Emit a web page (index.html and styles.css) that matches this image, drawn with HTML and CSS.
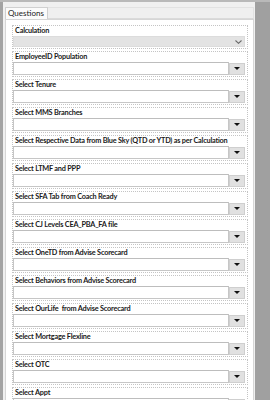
FILE: index.html
```html
<!DOCTYPE html>
<html>
<head>
<meta charset="utf-8">
<link rel="stylesheet" href="styles.css">
</head>
<body>
<div class="frame">
  <div class="topband"></div>
  <div class="row">
    <div class="leftbar"></div>
    <div class="main">
      <div class="tabs">
        <div class="tab">Questions</div>
        <div class="tabfill"></div>
      </div>
      <div class="panel">
        <div class="group calc">
          <div class="label">Calculation</div>
          <div class="calcbox"><svg class="chev" width="7" height="4" viewBox="0 0 7 4"><path d="M0.5 0.5 L3.5 3.3 L6.5 0.5" fill="none" stroke="#6a6a6a" stroke-width="1.1"/></svg></div>
        </div>
        <div class="group"><div class="label">EmployeeID Population</div><div class="combo"><div class="field"></div><div class="btn"><span class="tri"></span></div></div></div>
        <div class="group"><div class="label">Select Tenure</div><div class="combo"><div class="field"></div><div class="btn"><span class="tri"></span></div></div></div>
        <div class="group"><div class="label">Select MMS Branches</div><div class="combo"><div class="field"></div><div class="btn"><span class="tri"></span></div></div></div>
        <div class="group"><div class="label">Select Respective Data from Blue Sky (QTD or YTD) as per Calculation</div><div class="combo"><div class="field"></div><div class="btn"><span class="tri"></span></div></div></div>
        <div class="group"><div class="label">Select LTMF and PPP</div><div class="combo"><div class="field"></div><div class="btn"><span class="tri"></span></div></div></div>
        <div class="group"><div class="label">Select SFA Tab from Coach Ready</div><div class="combo"><div class="field"></div><div class="btn"><span class="tri"></span></div></div></div>
        <div class="group"><div class="label">Select CJ Levels CEA_PBA_FA file</div><div class="combo"><div class="field"></div><div class="btn"><span class="tri"></span></div></div></div>
        <div class="group"><div class="label">Select OneTD from Advise Scorecard</div><div class="combo"><div class="field"></div><div class="btn"><span class="tri"></span></div></div></div>
        <div class="group"><div class="label">Select Behaviors from Advise Scorecard</div><div class="combo"><div class="field"></div><div class="btn"><span class="tri"></span></div></div></div>
        <div class="group"><div class="label">Select OurLife&nbsp; from Advise Scorecard</div><div class="combo"><div class="field"></div><div class="btn"><span class="tri"></span></div></div></div>
        <div class="group"><div class="label">Select Mortgage Flexline</div><div class="combo"><div class="field"></div><div class="btn"><span class="tri"></span></div></div></div>
        <div class="group"><div class="label">Select OTC</div><div class="combo"><div class="field"></div><div class="btn"><span class="tri"></span></div></div></div>
        <div class="group"><div class="label">Select Appt</div><div class="combo"><div class="field"></div><div class="btn"><span class="tri"></span></div></div></div>
      </div>
    </div>
    <div class="rightbar"></div>
  </div>
</div>
</body>
</html>
```

FILE: styles.css
```css
html, body {
  margin: 0;
  padding: 0;
  background: #f0f0f0;
  overflow: hidden;
}
.frame {
  width: 270px;
  height: 400px;
  display: flex;
  flex-direction: column;
  font-family: Lato, "Open Sans", sans-serif;
  font-size: 7.3px;
  color: #1a1a1a;
}
.topband {
  height: 2px;
  background: #b9b9b9;
  flex: none;
}
.row {
  flex: 1;
  display: flex;
  min-height: 0;
}
.leftbar {
  width: 3px;
  background: #a3a3a3;
  flex: none;
}
.rightbar {
  width: 15px;
  background: #a0a0a0;
  flex: none;
}
.main {
  flex: 1;
  padding: 5px 1px 0 2px;
  display: flex;
  flex-direction: column;
  min-width: 0;
}
.tabs {
  display: flex;
  height: 12px;
  flex: none;
}
.tab {
  width: 39px;
  border: 1px solid #d0d0d0;
  border-bottom: none;
  background: #fbfbfb;
  padding-left: 2px;
  line-height: 11px;
  font-size: 8px;
}
.tabfill {
  flex: 1;
  background: #efefef;
  border-top: 1px solid #e2e2e2;
  border-right: 1px solid #e2e2e2;
  border-bottom: 1px solid #dadada;
}
.panel {
  flex: 1;
  background: #ffffff;
  border: 1px solid #d6d6d6;
  border-bottom: none;
  padding: 5px 5px 0 6px;
  display: flex;
  flex-direction: column;
  gap: 2px;
}
.group {
  border: 1px dotted #c4c4c4;
  height: 26px;
  box-sizing: border-box;
  display: flex;
  flex-direction: column;
  flex: none;
  padding-right: 2px;
}
.group.calc {
  height: 24px;
}
.label {
  height: 10px;
  line-height: 10px;
  padding-left: 2px;
  font-weight: 700;
  letter-spacing: -0.2px;
  white-space: nowrap;
}
.calcbox {
  height: 11px;
  background: #e3e3e3;
  border: 1px solid #dcdcdc;
  box-sizing: border-box;
  display: flex;
  align-items: center;
  justify-content: flex-end;
  padding-right: 2px;
}
.chev {
  display: block;
}
.combo {
  display: flex;
  align-items: center;
  height: 13px;
}
.field {
  flex: 1;
  height: 13px;
  box-sizing: border-box;
  border: 1px solid #c6c6c6;
  border-top-color: #bdbdbd;
  background: #fff;
}
.btn {
  width: 16px;
  height: 12px;
  box-sizing: border-box;
  background: #e1e1e1;
  border: 1px solid #cfcfcf;
  display: flex;
  align-items: center;
  justify-content: center;
}
.tri {
  width: 0;
  height: 0;
  border-left: 3px solid transparent;
  border-right: 3px solid transparent;
  border-top: 3px solid #111;
}
```
